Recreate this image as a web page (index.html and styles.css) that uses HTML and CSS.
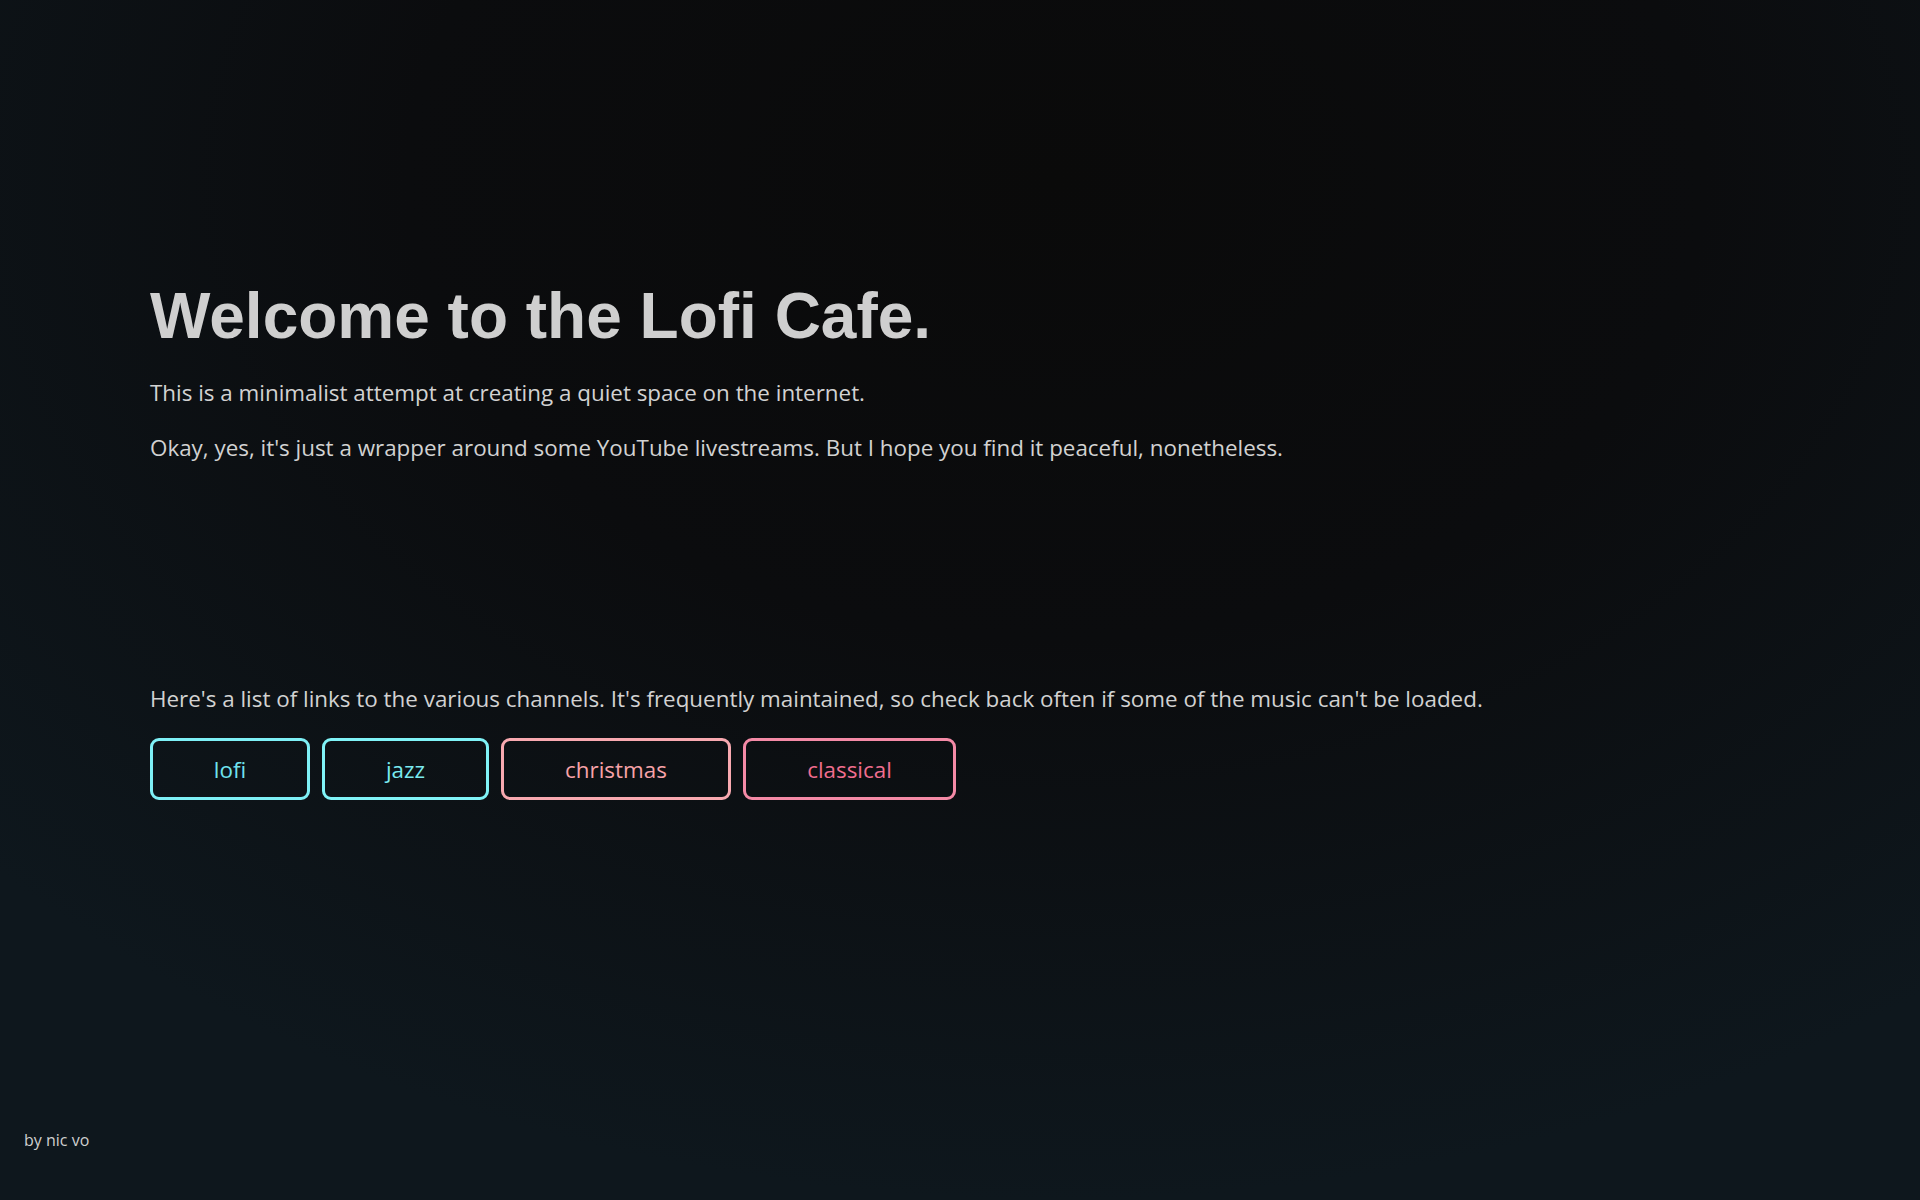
FILE: index.html
```html
<!DOCTYPE html>
<html lang="en">
<head>
<meta charset="utf-8">
<title>Lofi Cafe</title>
<link rel="stylesheet" href="styles.css">
</head>
<body>
<main class="page">
  <section class="intro">
    <h1 class="title">Welcome to the Lofi Cafe.</h1>
    <p class="text">This is a minimalist attempt at creating a quiet space on the internet.</p>
    <p class="text">Okay, yes, it's just a wrapper around some YouTube livestreams. But I hope you find it peaceful, nonetheless.</p>
  </section>
  <section class="channels">
    <p class="text">Here's a list of links to the various channels. It's frequently maintained, so check back often if some of the music can't be loaded.</p>
    <nav class="links">
      <a class="btn btn-lofi" href="#">lofi</a>
      <a class="btn btn-jazz" href="#">jazz</a>
      <a class="btn btn-christmas" href="#">christmas</a>
      <a class="btn btn-classical" href="#">classical</a>
    </nav>
  </section>
  <footer class="credit">by nic vo</footer>
</main>
</body>
</html>
```
FILE: styles.css
```css
html, body {
  margin: 0;
  height: 100%;
}
body {
  background: radial-gradient(ellipse 75% 85% at 55% 15%, #0a0a0a 0%, #0b0c0e 45%, #0e171d 100%);
  background-color: #0d161b;
  color: #d2d2d2;
  font-family: "Open Sans", "Noto Sans", sans-serif;
}
.page {
  box-sizing: border-box;
  height: 1200px;
  display: flex;
  flex-direction: column;
  padding: 279px 0 0 150px;
  position: relative;
}
.title {
  font-family: "Liberation Sans", Arial, sans-serif;
  font-weight: 700;
  font-size: 64px;
  line-height: 74px;
  color: #cfcfcf;
  margin: 0 0 25px;
}
.text {
  font-size: 22.4px;
  line-height: 30px;
  margin: 0 0 25px;
}
.channels {
  margin-top: 196px;
}
.channels .text {
  margin-bottom: 24px;
}
.links {
  display: flex;
  gap: 12px;
}
.btn {
  box-sizing: border-box;
  height: 62px;
  display: flex;
  align-items: center;
  justify-content: center;
  border: 3px solid;
  border-radius: 9px;
  font-size: 22.4px;
  text-decoration: none;
}
.btn-lofi { width: 160px; border-color: #7ef0f6; color: #6fe3ee; }
.btn-jazz { width: 167px; border-color: #80f3f7; color: #7ae9ef; }
.btn-christmas { width: 230px; border-color: #f8a9b0; color: #f7a2a8; }
.btn-classical { width: 213px; border-color: #f48aa6; color: #f06d8e; }
.credit {
  position: absolute;
  left: 24px;
  top: 1129px;
  font-size: 16px;
  line-height: 22px;
  color: #cfcfcf;
}
```
